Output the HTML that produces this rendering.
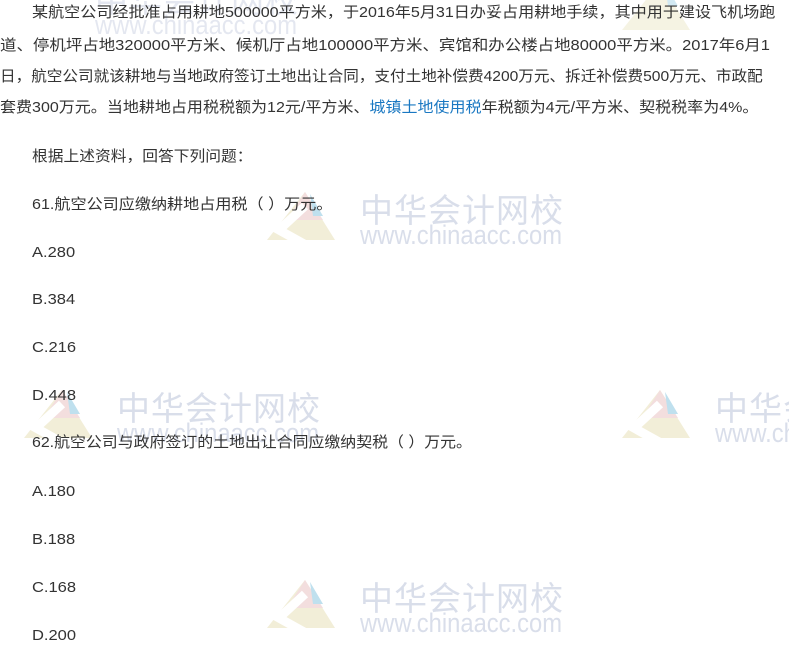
<!DOCTYPE html>
<html><head><meta charset="utf-8"><style>
body{margin:0;width:789px;height:659px;overflow:hidden;background:#fff;position:relative;font-family:"Liberation Sans","Noto Sans CJK SC",sans-serif;}
.t{position:absolute;left:0;font-size:15px;color:#333;white-space:nowrap;line-height:20px;transform-origin:left center;}
.wm{position:absolute;width:300px;height:70px;}
.wm .c{position:absolute;left:95px;top:-4px;font-size:33px;color:#d9deea;letter-spacing:1px;font-family:"Noto Sans CJK SC",sans-serif;white-space:nowrap;}
.wm .u{position:absolute;left:95px;top:32px;font-size:27px;color:#d9deea;transform:scaleX(0.88);transform-origin:left;white-space:nowrap;}
a{color:#1a78c2;text-decoration:none}
</style></head><body>
<div class="wm" style="left:265px;top:188px"><svg width="90" height="60" style="position:absolute;left:0;top:0"><polygon points="40,4 70,52 2,52" fill="#f2eed8"/><polygon points="40,4 58,32 22,32" fill="#f3dede"/><polygon points="45,6 58,28 48,28" fill="#bfe0ee"/><path d="M40,18 L14,42 L50,62" stroke="#fff" stroke-width="9" fill="none"/><path d="M60,20 L84,50" stroke="#fff" stroke-width="7"/></svg><div class="c">中华会计网校</div><div class="u">www.chinaacc.com</div></div>
<div class="wm" style="left:22px;top:386px"><svg width="90" height="60" style="position:absolute;left:0;top:0"><polygon points="40,4 70,52 2,52" fill="#f2eed8"/><polygon points="40,4 58,32 22,32" fill="#f3dede"/><polygon points="45,6 58,28 48,28" fill="#bfe0ee"/><path d="M40,18 L14,42 L50,62" stroke="#fff" stroke-width="9" fill="none"/></svg><div class="c">中华会计网校</div><div class="u">www.chinaacc.com</div></div>
<div class="wm" style="left:620px;top:386px"><svg width="90" height="60" style="position:absolute;left:0;top:0"><polygon points="40,4 70,52 2,52" fill="#f2eed8"/><polygon points="40,4 58,32 22,32" fill="#f3dede"/><polygon points="45,6 58,28 48,28" fill="#bfe0ee"/><path d="M40,18 L14,42 L50,62" stroke="#fff" stroke-width="9" fill="none"/></svg><div class="c">中华会计网校</div><div class="u">www.chinaacc.com</div></div>
<div class="wm" style="left:265px;top:576px"><svg width="90" height="60" style="position:absolute;left:0;top:0"><polygon points="40,4 70,52 2,52" fill="#f2eed8"/><polygon points="40,4 58,32 22,32" fill="#f3dede"/><polygon points="45,6 58,28 48,28" fill="#bfe0ee"/><path d="M40,18 L14,42 L50,62" stroke="#fff" stroke-width="9" fill="none"/></svg><div class="c">中华会计网校</div><div class="u">www.chinaacc.com</div></div>
<div class="wm" style="left:0px;top:-22px;opacity:.7"><div class="c">中华会计网校</div><div class="u">www.chinaacc.com</div></div>
<div class="wm" style="left:620px;top:-22px;opacity:.7"><svg width="90" height="60" style="position:absolute;left:0;top:0"><polygon points="40,4 70,52 2,52" fill="#f2eed8"/><polygon points="45,6 58,28 48,28" fill="#bfe0ee"/></svg></div>

<div class="t" style="top:3px;left:32px;transform:scaleX(1.072)">某航空公司经批准占用耕地500000平方米，于2016年5月31日办妥占用耕地手续，其中用于建设飞机场跑</div>
<div class="t" style="top:36px;transform:scaleX(1.097)">道、停机坪占地320000平方米、候机厅占地100000平方米、宾馆和办公楼占地80000平方米。2017年6月1</div>
<div class="t" style="top:67px;transform:scaleX(1.04)">日，航空公司就该耕地与当地政府签订土地出让合同，支付土地补偿费4200万元、拆迁补偿费500万元、市政配</div>
<div class="t" style="top:98px;transform:scaleX(1.068)">套费300万元。当地耕地占用税税额为12元/平方米、<a>城镇土地使用税</a>年税额为4元/平方米、契税税率为4%。</div>
<div class="t" style="top:147px;left:32px;transform:scaleX(1.05)">根据上述资料，回答下列问题：</div>
<div class="t" style="top:195px;left:32px;transform:scaleX(1.073)">61.航空公司应缴纳耕地占用税（  ）万元。</div>
<div class="t" style="top:243px;left:32px;transform:scaleX(1.1)">A.280</div>
<div class="t" style="top:290px;left:32px;transform:scaleX(1.1)">B.384</div>
<div class="t" style="top:338px;left:32px;transform:scaleX(1.1)">C.216</div>
<div class="t" style="top:386px;left:32px;transform:scaleX(1.1)">D.448</div>
<div class="t" style="top:433px;left:32px;transform:scaleX(1.06)">62.航空公司与政府签订的土地出让合同应缴纳契税（  ）万元。</div>
<div class="t" style="top:482px;left:32px;transform:scaleX(1.1)">A.180</div>
<div class="t" style="top:530px;left:32px;transform:scaleX(1.1)">B.188</div>
<div class="t" style="top:578px;left:32px;transform:scaleX(1.1)">C.168</div>
<div class="t" style="top:626px;left:32px;transform:scaleX(1.1)">D.200</div>
</body></html>
